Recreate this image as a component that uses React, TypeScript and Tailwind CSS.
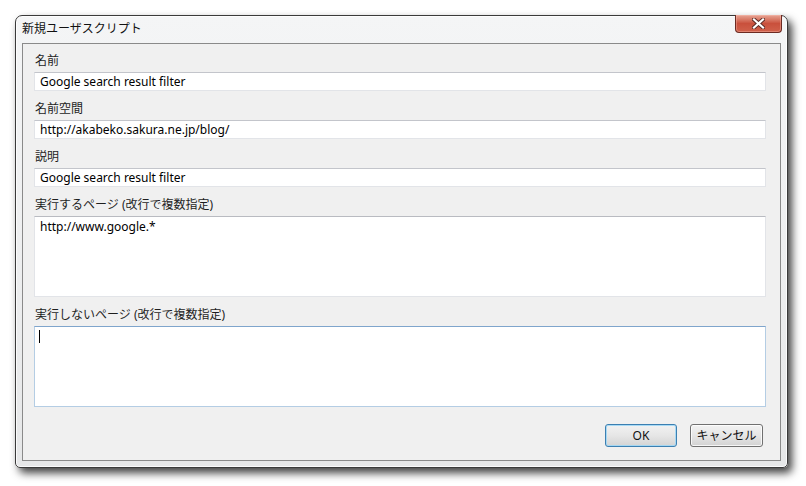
import React from "react";

const font = { fontFamily: '"Noto Sans", "Noto Sans CJK JP", sans-serif' };

function Label({ children, first }: { children: React.ReactNode; first?: boolean }) {
  return (
    <div className={`${first ? "" : "mt-[10px]"} mb-[2px] h-[17px] leading-[16px] pl-[1px] text-[12px] text-[#1e1e1e]`}>
      {children}
    </div>
  );
}

function Field({ value }: { value: string }) {
  return (
    <div className="h-[19px] border border-[#e2e4e8] border-t-[#c3c5cb] bg-white pl-[5px] text-[12px] leading-[17px] text-black">
      {value}
    </div>
  );
}

export default function App() {
  return (
    <div className="w-[806px] h-[486px] bg-white pl-[15px] pt-[15px]" style={font}>
      {/* window frame */}
      <div className="relative flex h-[453px] w-[773px] flex-col rounded-t-[7px] rounded-b-[5px] border border-[#3a3a3a] bg-gradient-to-b from-[#f4f5f6] via-[#eeeff0] to-[#e6e7e8] px-[6px] pb-[6px] shadow-[4px_5px_8px_rgba(0,0,0,0.75),inset_0_0_0_1px_rgba(255,255,255,0.8)]">
        {/* title bar */}
        <div className="flex h-[27px] items-start justify-between">
          <div className="pt-[4px] text-[12px] leading-[17px] text-[#111]">新規ユーザスクリプト</div>
          <div className="-mt-[1px] mr-[-1px] flex h-[18px] w-[47px] items-center justify-center rounded-b-[4px] border border-t-0 border-[#6b2a22] bg-gradient-to-b from-[#e7a595] via-[#c9503c] to-[#d0614b] shadow-[inset_0_0_0_1px_rgba(255,200,190,0.35)]">
            <svg width="13" height="11" viewBox="0 0 13 11">
              <path
                d="M2 1.5 L11 9.5 M11 1.5 L2 9.5"
                stroke="#5a2a24"
                strokeWidth="4"
                strokeLinecap="square"
                fill="none"
              />
              <path
                d="M2 1.5 L11 9.5 M11 1.5 L2 9.5"
                stroke="#ffffff"
                strokeWidth="2.2"
                strokeLinecap="square"
                fill="none"
              />
            </svg>
          </div>
        </div>

        {/* client area */}
        <div className="flex flex-1 flex-col border border-[#8a8a8a] bg-[#f0f0f0] pl-[11px] pr-[14px] pt-[9px]">
          <Label first>名前</Label>
          <Field value="Google search result filter" />

          <Label>名前空間</Label>
          <Field value="http://akabeko.sakura.ne.jp/blog/" />

          <Label>説明</Label>
          <Field value="Google search result filter" />

          <Label>実行するページ (改行で複数指定)</Label>
          <div className="h-[81px] border border-[#e2e4e8] border-t-[#b9bbc1] bg-white pl-[5px] pt-[1px] text-[12px] leading-[17px] text-black">
            http://www.google.*
          </div>

          <Label>実行しないページ (改行で複数指定)</Label>
          <div className="h-[81px] border border-[#b4cde4] border-t-[#7fa5cc] bg-white pl-[4px] pt-[3px]">
            <div className="h-[13px] w-[1px] bg-black" />
          </div>

          <div className="mt-[17px] flex justify-end gap-[13px] pr-[3px]">
            <button className="h-[23px] w-[72px] rounded-[3px] border border-[#3c7fb1] bg-gradient-to-b from-[#f2f2f2] via-[#e6e6e6] to-[#d4d4d4] text-[12px] leading-[17px] text-[#111] shadow-[inset_0_0_0_1px_rgba(160,215,245,0.9)]">
              OK
            </button>
            <button className="h-[23px] w-[73px] rounded-[3px] border border-[#707070] bg-gradient-to-b from-[#f2f2f2] via-[#e6e6e6] to-[#d2d2d2] text-[12px] leading-[17px] text-[#111] shadow-[inset_0_0_0_1px_rgba(255,255,255,0.8)]">
              キャンセル
            </button>
          </div>
        </div>
      </div>
    </div>
  );
}
